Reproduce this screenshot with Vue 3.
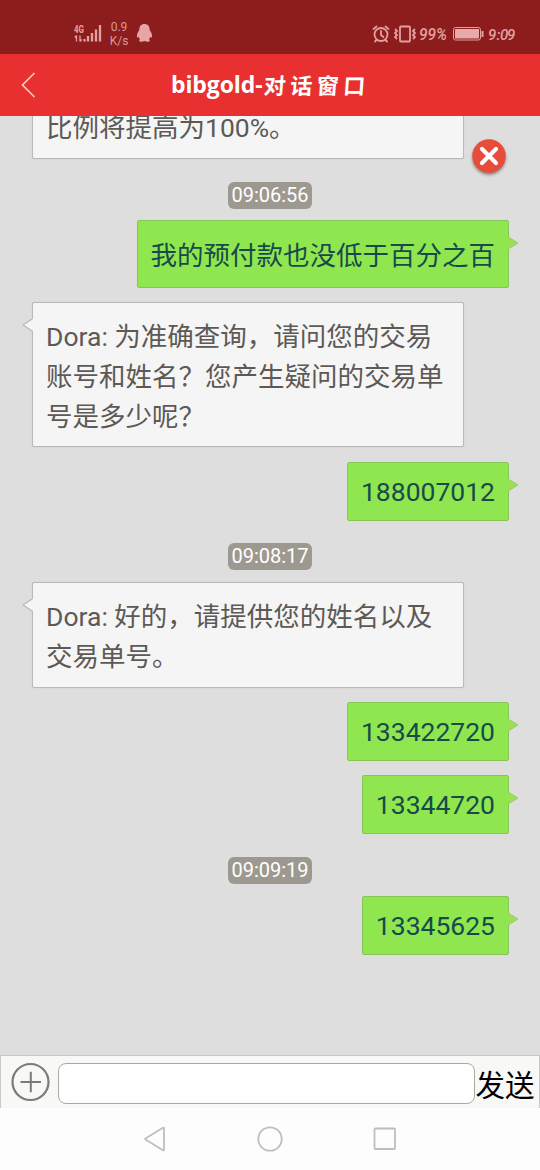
<script setup>
const messages = [
  { kind: 'received', lines: ['比例将提高为100%。'] },
  { kind: 'time', lines: ['09:06:56'] },
  { kind: 'sent', tall: true, lines: ['我的预付款也没低于百分之百'] },
  { kind: 'received', lines: ['Dora: 为准确查询，请问您的交易', '账号和姓名？您产生疑问的交易单', '号是多少呢？'] },
  { kind: 'sent', lines: ['188007012'] },
  { kind: 'time', lines: ['09:08:17'] },
  { kind: 'received', lines: ['Dora: 好的，请提供您的姓名以及', '交易单号。'] },
  { kind: 'sent', lines: ['133422720'] },
  { kind: 'sent', lines: ['13344720'] },
  { kind: 'time', lines: ['09:09:19'] },
  { kind: 'sent', lines: ['13345625'] },
]
</script>

<template>
  <div class="screen">
    <div class="status">
      <svg class="signal" width="30" height="20" viewBox="0 0 30 20">
        <text x="0" y="9" class="net" textLength="10" lengthAdjust="spacingAndGlyphs">4G</text>
        <path d="M2.500 11.500v6M.8 13.500l1.700-2M6 11.500v6M7.700 15.500L6 17.500" stroke="#e2a0a1" stroke-width="1.300" fill="none" />
        <path d="M10.500 15v2.500M14 12v5.500M18 9v8.500M22 5.500v12M26 1v16.500" stroke="#e2a0a1" stroke-width="2.300" />
      </svg>
      <div class="speed"><span>0.9</span><span>K/s</span></div>
      <svg class="penguin" width="17" height="20" viewBox="0 0 17 20">
        <path d="M8.500 1C5 1 3.300 3.300 3.300 7 1.500 9.500.5 12 1 14.500c.6.300 1.100-.4 1.500-1 .3 1.300.8 2.200 1.500 3-1.300.7-1.200 2 .5 2.200 1.500.2 3-.2 4-.8 1 .6 2.500 1 4 .8 1.700-.2 1.800-1.500.5-2.200.7-.8 1.200-1.700 1.500-3 .4.6.9 1.300 1.500 1 .5-2.500-.5-5-2.300-7.500C13.700 3.300 12 1 8.500 1z" fill="#e8a5a6" />
      </svg>
      <div class="status-right">
        <svg width="18" height="18" viewBox="0 0 18 18" fill="none" stroke="#e2a0a1" stroke-width="1.800" stroke-linecap="round">
          <circle cx="9" cy="9.500" r="6.500" />
          <path d="M9 6v4l2.500 2M1.500 4l3-2.500M16.500 4l-3-2.500M4.500 15L3 16.500M13.500 15l1.500 1.500" />
        </svg>
        <svg class="vibrate" width="22" height="18" viewBox="0 0 22 18" fill="none" stroke="#e2a0a1" stroke-width="1.800">
          <rect x="6" y="1.500" width="10" height="15" rx="1" />
          <path d="M1 4l2 2-2 2 2 2-2 2 2 2M21 4l-2 2 2 2-2 2 2 2-2 2" />
        </svg>
        <svg width="96" height="20" viewBox="0 0 96 20">
          <text x="0" y="15.500" class="hand" textLength="28" lengthAdjust="spacingAndGlyphs">99%</text>
          <rect x="34.500" y="3.500" width="27" height="12.500" rx="2" fill="none" stroke="#e2a0a1" />
          <rect x="36" y="5" width="24" height="9.500" fill="#e8a9aa" />
          <path d="M63.500 7v6" stroke="#e2a0a1" stroke-width="2" />
          <text y="15.500" class="hand clock"><tspan x="69">9</tspan><tspan x="77.500">:</tspan><tspan x="81">0</tspan><tspan x="88">9</tspan></text>
        </svg>
      </div>
    </div>

    <header class="header">
      <svg width="16" height="28" viewBox="0 0 16 28"><path d="M13.500 2L1.500 14l12 12" fill="none" stroke="#ffc9b8" stroke-width="1.700" /></svg>
      <h1><span class="latin">bibgold-</span><span class="han">对话窗口</span></h1>
    </header>

    <main class="chat">
      <div v-for="(m, i) in messages" :key="i" class="row" :class="[m.kind, { tall: m.tall }]">
        <span v-if="m.kind === 'time'" class="pill">{{ m.lines[0] }}</span>
        <div v-else class="bubble">
          <p v-for="line in m.lines" :key="line">{{ line }}</p>
          <svg v-if="m.kind === 'sent'" class="tail" width="11" height="14" viewBox="0 0 11 14">
            <path d="M0 1l9.500 6L0 13z" fill="#99e052" /><path d="M1 1.500L10 7 1 12.500" fill="none" stroke="#98cb68" />
          </svg>
          <svg v-else-if="i > 0" class="tail" width="11" height="14" viewBox="0 0 11 14">
            <path d="M11 1L1.500 7l9.500 6z" fill="#f5f5f5" /><path d="M10 1L1 7l9 6" fill="none" stroke="#b9b9bb" stroke-width="1.300" />
          </svg>
        </div>
      </div>
      <svg class="close" width="40" height="40" viewBox="0 0 40 40">
        <circle cx="20" cy="20" r="16.700" fill="#e74b3a" />
        <path d="M13 13l14 14M27 13L13 27" stroke="#fff" stroke-width="4.200" stroke-linecap="round" />
      </svg>
    </main>

    <div class="composer">
      <svg width="40" height="40" viewBox="0 0 40 40" fill="none" stroke="#7b7b7b">
        <circle cx="20.500" cy="20" r="18" stroke-width="2.200" /><path d="M10.500 20H31M20.800 9.700v20.500" stroke-width="2" />
      </svg>
      <input type="text" />
      <button>发送</button>
    </div>
    <nav class="nav">
      <svg width="24" height="28" viewBox="0 0 24 28"><path d="M21 3.200v21.600q0 1-1 .4L2.500 14.600q-.8-.6 0-1.200L20 2.800q1-.6 1 .4z" /></svg>
      <svg width="28" height="28" viewBox="0 0 28 28"><circle cx="14" cy="14" r="11.700" /></svg>
      <svg width="24" height="28" viewBox="0 0 24 28"><rect x="1.500" y="3.500" width="20.500" height="20.500" rx="1" /></svg>
    </nav>
  </div>
</template>

<style>
body { margin: 0; }
</style>

<style scoped>
* { box-sizing: border-box; }
.screen { width: 540px; height: 1170px; display: flex; flex-direction: column; overflow: hidden; background: #dedede; font-family: Roboto, "Noto Sans CJK SC", sans-serif; }
.status { height: 54px; flex: none; display: flex; align-items: center; padding: 13px 24px 0 74px; background: #8c1d1c; color: #dc9697; }
.net { font: 700 10.500px Roboto, sans-serif; fill: #e2a0a1; }
.speed { display: flex; flex-direction: column; align-items: center; width: 20px; margin-left: 5px; font-size: 12px; line-height: 14px; }
.penguin { margin-left: 7px; margin-top: -2px; }
.status-right { margin-left: auto; display: flex; align-items: center; margin-right: 1px; }
.vibrate { margin: 0 3px 0 4px; }
.hand { font: italic 500 16px Roboto, sans-serif; fill: #e2a0a1; }
.clock { font-size: 15px; }
.header { height: 62px; flex: none; display: flex; align-items: center; padding-left: 21px; background: #e93031; }
.header h1 { display: flex; align-items: center; margin: -3px 0 0 134px; color: #fff; line-height: 36px; font-weight: 700; }
.latin { width: 93px; font-family: "Open Sans", sans-serif; font-size: 23px; letter-spacing: -0.1px; white-space: nowrap; }
.han { font-family: "Noto Sans CJK SC", sans-serif; font-size: 22px; letter-spacing: 4.500px; transform: skewX(-4deg); }
.chat { height: 939px; flex: none; position: relative; overflow: hidden; }
.row { display: flex; margin-top: 14.300px; padding: 0 31px 0 32px; }
.row:first-child { margin-top: -23.300px; }
.sent { justify-content: flex-end; }
.row.time { justify-content: center; margin-top: 22.900px; padding: 0; }
.time + .row { margin-top: 11.500px; }
.pill { width: 84px; height: 27px; border-radius: 6px; background: #9d9990; color: #fff; font-size: 20px; line-height: 27px; text-align: center; }
.bubble { position: relative; border: 1px solid #b9b9bb; border-radius: 2px; box-shadow: 0 0 1px #b9b9bb; font-size: 26.500px; }
.bubble p { margin: 0; white-space: nowrap; }
.received .bubble { width: 432px; padding: 14.600px 12.500px 9.700px 13px; background: #f5f5f5; color: #5d5955; }
.received p { line-height: 39.700px; height: 39.700px; }
.sent .bubble { padding: 0 13px; background: #90e64e; border: 1px solid #88c558; box-shadow: none; color: #174b4b; }
.sent p { line-height: 57px; height: 57px; }
.tall p { line-height: 69px; height: 65.500px; }
.tail { position: absolute; top: 15px; }
.sent .tail { right: -11px; }
.received .tail { left: -11px; }
.close { position: absolute; left: 469px; top: 20px; filter: drop-shadow(0 2px 1.500px rgba(80, 40, 30, .55)); }
.composer { height: 53px; flex: none; display: flex; align-items: center; padding-left: 9px; background: #f8f8f7; border: solid #c9c9c9; border-width: 1.500px 1px 0; }
.composer input { width: 417px; height: 41px; margin: 2px 0 0 7.500px; border: 1.300px solid #aaa9a1; border-radius: 8px; background: #fff; outline: none; }
.composer button { margin: 2px 0 0 1px; padding: 0; border: 0; background: none; font: 29.500px "Noto Sans CJK SC", sans-serif; line-height: 40px; color: #000; white-space: nowrap; }
.nav { flex: 1; display: flex; align-items: center; padding-left: 143px; background: #fdfdfd; }
.nav svg { fill: none; stroke: #bebebe; stroke-width: 1.800; }
.nav svg + svg { margin-left: 89px; }
</style>
